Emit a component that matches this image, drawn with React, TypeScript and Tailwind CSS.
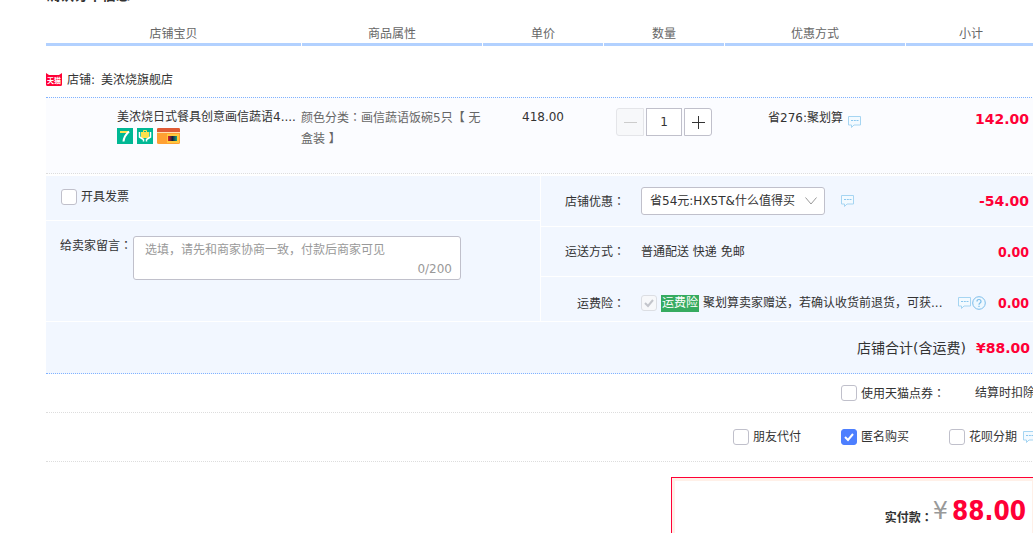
import type { ReactNode } from "react"

const columns = [
    { name: "店铺宝贝", width: "w-[255px]" },
    { name: "商品属性", width: "w-[180px]" },
    { name: "单价", width: "w-[120px]" },
    { name: "数量", width: "w-[120px]" },
    { name: "优惠方式", width: "w-[180px]" },
    { name: "小计", width: "flex-1" },
]

// full-width colon, centred in its box
function Colon() {
    return <span className="font-['Noto_Sans_CJK_TC',sans-serif]">：</span>
}

function Tip() {
    return (
        <svg className="shrink-0" width="13" height="12" viewBox="0 0 13 12" fill="none" stroke="#a6d5f2">
            <path d="M.5.5h12v8.500H6L3.500 11.500V9H.5z" fill="#f3faff" />
            <path d="M3 4.500h2M5.800 4.500h2M8.500 4.500h2" stroke="#8cc8ef" />
        </svg>
    )
}

function Help() {
    return (
        <svg className="shrink-0" width="14" height="14" viewBox="0 0 14 14" fill="none" stroke="#7dbdea">
            <circle cx="7" cy="7" r="6.300" fill="#eef8ff" />
            <path d="M5 5.500Q5 3.500 7 3.500T9 5.400Q9 6.300 8 7T7 8.800M7 9.800v1.200" strokeWidth="1.200" />
        </svg>
    )
}

function Check({ label, on, off }: { label: ReactNode; on?: boolean; off?: boolean }) {
    return (
        <label className="flex items-center gap-1 whitespace-nowrap">
            <span className="grid size-4 shrink-0">
                <input
                    type="checkbox"
                    defaultChecked={on}
                    disabled={off}
                    className="col-start-1 row-start-1 size-4 appearance-none rounded-[3px] border border-[#c0c0cb] bg-white checked:border-[#4d7fff] checked:bg-[#4d7fff] disabled:border-[#dcdee3] disabled:bg-[#f7f8fa]"
                />
                {on && (
                    <svg className="pointer-events-none col-start-1 row-start-1" viewBox="0 0 16 16" fill="none" stroke={off ? "#c3c5cb" : "#fff"} strokeWidth="2">
                        <path d="M4 8l3 3 5-6" />
                    </svg>
                )}
            </span>
            <span>{label}</span>
        </label>
    )
}

function Price({ children }: { children: ReactNode }) {
    return <span className="text-sm font-bold text-[#ff0036]">{children}</span>
}

function SmallPrice({ children }: { children: ReactNode }) {
    return <span className="font-['DejaVu_Sans_Condensed','DejaVu_Sans'] text-sm font-bold text-[#ff0036]">{children}</span>
}

export default function App() {
    return (
        <main className="overflow-hidden bg-white pl-[46px] font-['DejaVu_Sans','Noto_Sans_CJK_SC',sans-serif] text-xs text-[#333]">
            <div className="-mr-[3px]">
                <div className="flex h-[46px] flex-col justify-between">
                    <h1 className="-mt-[13px] h-4 text-sm leading-4 font-bold">确认订单信息</h1>
                    <div className="flex gap-px text-center leading-[18px] text-[#666]">
                        {columns.map((c) => (
                            <div key={c.name} className={`${c.width} border-b-3 border-[#b2d1ff]`}>{c.name}</div>
                        ))}
                    </div>
                </div>

                <div className="flex h-[51px] items-end gap-[5px] pb-[7px]">
                    <svg className="mb-1" width="16" height="13" viewBox="0 0 16 13">
                        <path d="M0 0l3 2h10l3-2v11.500q0 1.500-1.500 1.500h-13Q0 13 0 11.500z" fill="#ff0036" />
                        <text x="1" y="9.500" fontSize="7" fontWeight="700" fill="#fff">天猫</text>
                    </svg>
                    <span className="flex gap-1.5 leading-5"><span>店铺:</span><a href="#">美浓烧旗舰店</a></span>
                </div>

                <section className="flex h-[77px] border-y border-t-[#80b2ff] border-b-[#ddd] border-dotted bg-[#fbfcff]">
                    <div className="w-[255px] pt-[9px] pl-[71px]">
                        <a href="#" className="block leading-5 whitespace-nowrap">美浓烧日式餐具创意画信蔬语4....</a>
                        <div className="mt-px flex gap-1">
                            <svg width="16" height="16" viewBox="0 0 16 16">
                                <path d="M0 0h16v16H0z" fill="#00b894" />
                                <path d="M3 4h9" stroke="#ffe14d" strokeWidth="2" />
                                <path d="M12 3.500Q7 8 6.500 13.500" fill="none" stroke="#fff" strokeWidth="2" />
                            </svg>
                            <svg width="16" height="16" viewBox="0 0 16 16">
                                <path d="M0 0h16v16H0z" fill="#00b894" />
                                <path d="M4 4h8v6H4z" fill="#ffe14d" />
                                <path d="M6.500 4.500v-2h3v2" fill="none" stroke="#ffe14d" />
                                <path d="M2.500 4v5l4 2.500v2M13.500 4v5l-4 2.500v2" fill="none" stroke="#fff" strokeWidth="1.500" />
                            </svg>
                            <svg width="23" height="16" viewBox="0 0 23 16">
                                <defs>
                                    <linearGradient id="chip">
                                        <stop offset="0" stopColor="#e0202a" />
                                        <stop offset=".5" stopColor="#12203c" />
                                        <stop offset="1" stopColor="#16a080" />
                                    </linearGradient>
                                </defs>
                                <rect width="23" height="16" rx="1.500" fill="#ffa033" />
                                <path d="M1 0h21l1 1v3H0V1z" fill="#df5a35" />
                                <path d="M0 4h23v1H0z" fill="#ffe0b0" />
                                <path d="M10 6h12v9H10z" fill="#ffc83d" />
                                <path d="M11 8h9v5h-9z" fill="url(#chip)" />
                            </svg>
                        </div>
                    </div>
                    <p className="w-[182px] pt-2 leading-[21px] text-[#666]">颜色分类<Colon />画信蔬语饭碗5只【 无盒装 】</p>
                    <div className="w-[120px] pt-[9px] text-center leading-5">418.00</div>
                    <div className="flex w-[121px] gap-0.5 pt-2.5 pl-[13px]">
                        <button disabled aria-label="减少" className="grid size-7 place-items-center rounded-l-[3px] border border-[#e4e5e9] bg-[#f7f8fa]">
                            <svg width="13" height="13" stroke="#ccc"><path d="M0 6.500h13" /></svg>
                        </button>
                        <input aria-label="数量" defaultValue="1" className="h-7 w-9 border border-[#c0c0cb] bg-white text-center" />
                        <button aria-label="增加" className="grid size-7 place-items-center rounded-r-[3px] border border-[#c0c0cb] bg-white">
                            <svg width="13" height="13" stroke="#333"><path d="M0 6.500h13M6.500 0v13" /></svg>
                        </button>
                    </div>
                    <div className="flex w-[181px] items-start justify-center gap-[5px] pt-2.5 leading-5">
                        省276:聚划算
                        <span className="pt-2"><Tip /></span>
                    </div>
                    <div className="flex-1 pt-[11px] pr-[7px] text-right leading-5"><Price>142.00</Price></div>
                </section>

                <section className="mt-0.5 flex gap-px">
                    <div className="flex w-[494px] flex-col gap-px">
                        <div className="flex h-11 items-center bg-[#f2f7ff] pb-0.5 pl-[15px]"><Check label="开具发票" /></div>
                        <div className="flex flex-1 items-start bg-[#f2f7ff] pt-[15px] pl-3.5">
                            <label htmlFor="memo" className="w-[73px] leading-[18px] whitespace-nowrap">给卖家留言<Colon /></label>
                            <div className="flex h-11 w-[328px] flex-col rounded-[3px] border border-[#c0c0cb] bg-white text-[#999]">
                                <textarea id="memo" className="h-6 resize-none px-[11px] pt-1 leading-[18px] outline-none placeholder:text-[#999]" placeholder="选填，请先和商家协商一致，付款后商家可见" />
                                <span className="pr-2 text-right leading-4">0/200</span>
                            </div>
                        </div>
                    </div>
                    <div className="flex flex-1 flex-col gap-px">
                        <div className="flex h-[50px] items-center bg-[#f2f7ff] pr-[7px]">
                            <label htmlFor="promo" className="w-[100px] pl-6 leading-5">店铺优惠<Colon /></label>
                            <div className="grid w-[184px] items-center">
                                <select id="promo" className="col-start-1 row-start-1 h-7 appearance-none rounded-[3px] border border-[#c0c0cb] bg-white px-2">
                                    <option>省54元:HX5T&什么值得买</option>
                                </select>
                                <svg className="pointer-events-none col-start-1 row-start-1 mr-2 justify-self-end" width="12" height="8" fill="none" stroke="#999"><path d="M.5.5L6 7 11.500.5" /></svg>
                            </div>
                            <span className="ml-4"><Tip /></span>
                            <span className="ml-auto"><Price>-54.00</Price></span>
                        </div>
                        <div className="flex h-[49px] items-center bg-[#f2f7ff] pr-[7px]">
                            <span className="w-[100px] pl-6">运送方式<Colon /></span>
                            普通配送 快递 免邮
                            <span className="ml-auto"><SmallPrice>0.00</SmallPrice></span>
                        </div>
                        <div className="flex h-11 items-center bg-[#f2f7ff] pt-2 pr-[7px]">
                            <span className="w-[100px] pl-9">运费险<Colon /></span>
                            <Check on off label={<span className="block bg-[#36ab60] px-px leading-[17px] text-white">运费险</span>} />
                            <span className="ml-1 whitespace-nowrap">聚划算卖家赠送，若确认收货前退货，可获...</span>
                            <span className="ml-auto flex items-center gap-px">
                                <Tip />
                                <Help />
                            </span>
                            <span className="ml-3"><SmallPrice>0.00</SmallPrice></span>
                        </div>
                    </div>
                </section>
                <div className="mt-px flex h-[52px] items-center justify-end gap-2.5 border-b border-dotted border-[#80b2ff] bg-[#f2f7ff] pr-[6px] text-sm">
                    店铺合计(含运费)
                    <Price>¥88.00</Price>
                </div>

                <div className="flex h-[39px] items-center border-b border-dotted border-[#ddd] pl-[795px] whitespace-nowrap">
                    <span className="w-[134px] shrink-0"><Check label={<>使用天猫点券<Colon /></>} /></span>
                    结算时扣除
                </div>
                <div className="flex h-[49px] items-center border-b border-dotted border-[#ddd] pl-[687px]">
                    <span className="w-27 shrink-0"><Check label="朋友代付" /></span>
                    <span className="w-27 shrink-0"><Check on label="匿名购买" /></span>
                    <Check label="花呗分期" />
                    <span className="ml-1.5"><Tip /></span>
                </div>

                <div className="mt-[15px] ml-auto w-[365px] border border-[#ff0036]">
                    <div className="flex h-20 items-start justify-end border-3 border-[#fff0e8] pt-3 pr-[6px]">
                        <span className="pt-3.5 leading-5 font-bold">实付款<Colon /></span>
                        <span className="text-2xl leading-9 text-[#999]">¥</span>
                        <span className="ml-1 font-['DejaVu_Sans_Condensed','DejaVu_Sans'] text-[26px] leading-9 font-bold text-[#ff0036]">88.00</span>
                    </div>
                </div>
            </div>
        </main>
    )
}
